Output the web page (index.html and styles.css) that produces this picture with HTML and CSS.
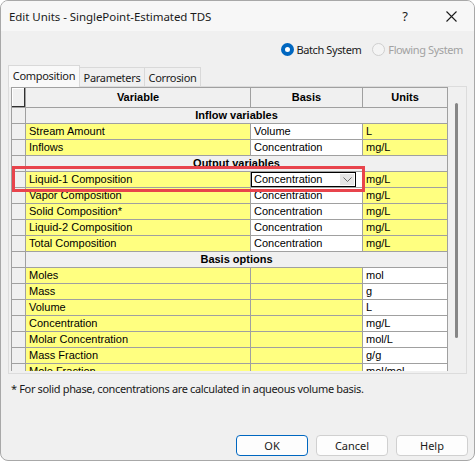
FILE: index.html
```html
<!DOCTYPE html>
<html lang="en">
<head>
  <meta charset="UTF-8" />
  <meta name="viewport" content="width=device-width, initial-scale=1.0"/>
  <title>Edit Units</title>
  <link rel="stylesheet" href="styles.css">
</head>
<body>
  <div class="window">
    <div class="titlebar">
      <span class="title">Edit Units - SinglePoint-Estimated TDS</span>
      <span class="title-btn help">?</span>
      <span class="title-btn close">
        <svg width="11" height="11" viewBox="0 0 11 11"><path d="M0.5 0.5 L10.5 10.5 M10.5 0.5 L0.5 10.5" stroke="#1b1b1b" stroke-width="1.1" fill="none"/></svg>
      </span>
    </div>

    <div class="systems">
      <label class="radio checked"><span class="dot"></span>Batch System</label>
      <label class="radio disabled"><span class="dot"></span>Flowing System</label>
    </div>

    <div class="tabs">
      <div class="tab active">Composition</div>
      <div class="tab">Parameters</div>
      <div class="tab">Corrosion</div>
    </div>

    <div class="tab-panel">
      <div class="grid">
        <div class="cell corner"></div>
        <div class="cell head">Variable</div>
        <div class="cell head">Basis</div>
        <div class="cell head">Units</div>

        <div class="cell rh"></div>
        <div class="cell group">Inflow variables</div>
        <div class="cell rh"></div>
        <div class="cell y">Stream Amount</div>
        <div class="cell w">Volume</div>
        <div class="cell y">L</div>
        <div class="cell rh"></div>
        <div class="cell y">Inflows</div>
        <div class="cell w">Concentration</div>
        <div class="cell y">mg/L</div>

        <div class="cell rh"></div>
        <div class="cell group">Output variables</div>
        <div class="cell rh"></div>
        <div class="cell y">Liquid-1 Composition</div>
        <div class="cell w combo-cell">
          <div class="combo">
            <span>Concentration</span>
            <span class="drop"><svg width="9" height="5" viewBox="0 0 9 5"><path d="M0.5 0.5 L4.5 4.5 L8.5 0.5" stroke="#6d6d6d" fill="none"/></svg></span>
          </div>
        </div>
        <div class="cell y">mg/L</div>
        <div class="cell rh"></div>
        <div class="cell y">Vapor Composition</div>
        <div class="cell w">Concentration</div>
        <div class="cell y">mg/L</div>
        <div class="cell rh"></div>
        <div class="cell y">Solid Composition*</div>
        <div class="cell w">Concentration</div>
        <div class="cell y">mg/L</div>
        <div class="cell rh"></div>
        <div class="cell y">Liquid-2 Composition</div>
        <div class="cell w">Concentration</div>
        <div class="cell y">mg/L</div>
        <div class="cell rh"></div>
        <div class="cell y">Total Composition</div>
        <div class="cell w">Concentration</div>
        <div class="cell y">mg/L</div>

        <div class="cell rh"></div>
        <div class="cell group">Basis options</div>
        <div class="cell rh"></div>
        <div class="cell y">Moles</div>
        <div class="cell y"></div>
        <div class="cell w">mol</div>
        <div class="cell rh"></div>
        <div class="cell y">Mass</div>
        <div class="cell y"></div>
        <div class="cell w">g</div>
        <div class="cell rh"></div>
        <div class="cell y">Volume</div>
        <div class="cell y"></div>
        <div class="cell w">L</div>
        <div class="cell rh"></div>
        <div class="cell y">Concentration</div>
        <div class="cell y"></div>
        <div class="cell w">mg/L</div>
        <div class="cell rh"></div>
        <div class="cell y">Molar Concentration</div>
        <div class="cell y"></div>
        <div class="cell w">mol/L</div>
        <div class="cell rh"></div>
        <div class="cell y">Mass Fraction</div>
        <div class="cell y"></div>
        <div class="cell w">g/g</div>
        <div class="cell rh"></div>
        <div class="cell y">Mole Fraction</div>
        <div class="cell y"></div>
        <div class="cell w">mol/mol</div>
      </div>
      <div class="scroll"><div class="thumb"></div></div>
      <div class="highlight"></div>
    </div>

    <p class="note">* For solid phase, concentrations are calculated in aqueous volume basis.</p>

    <div class="actions">
      <button class="btn default">OK</button>
      <button class="btn">Cancel</button>
      <button class="btn">Help</button>
    </div>
  </div>
</body>
</html>
```

FILE: styles.css
```css
body {
  margin: 0;
  background: #ffffff;
  font-family: 'Noto Sans', 'Liberation Sans', sans-serif;
  font-size: 11px;
  color: #1a1a1a;
}

.window {
  box-sizing: border-box;
  width: 475px;
  height: 461px;
  border: 1px solid #a8a8a8;
  border-radius: 8px;
  background: #f0f0f0;
  overflow: hidden;
}

.titlebar {
  height: 30px;
  display: flex;
  align-items: center;
  background: #f7f7f7;
  padding-left: 8px;
}

.title {
  flex: 1;
  font-size: 11.5px;
  letter-spacing: -0.05px;
  color: #1a1a1a;
}

.title-btn {
  display: flex;
  align-items: center;
  justify-content: center;
  width: 46px;
  height: 30px;
  font-size: 13px;
}

.systems {
  display: flex;
  justify-content: flex-end;
  gap: 11px;
  height: 16px;
  margin-top: 10px;
  padding-right: 11px;
}

.radio {
  display: flex;
  align-items: center;
  gap: 3px;
  font-size: 11px;
  letter-spacing: -0.4px;
}

.dot {
  box-sizing: border-box;
  width: 13px;
  height: 13px;
  border-radius: 50%;
  border: 1px solid #8a8a8a;
  background: #fafafa;
}

.checked .dot {
  border: 4px solid #0067c0;
  background: #ffffff;
}

.disabled { color: #a2a2a2; }
.disabled .dot { border-color: #cfcfcf; background: #f4f4f4; }

.tabs {
  display: flex;
  align-items: flex-end;
  height: 21px;
  margin-top: 8px;
  padding-left: 7px;
}

.tab {
  box-sizing: border-box;
  height: 19px;
  padding: 0;
  border: 1px solid #d9d9d9;
  border-bottom: none;
  border-left: none;
  display: flex;
  align-items: center;
  justify-content: center;
  background: #f0f0f0;
  letter-spacing: -0.3px;
}

.tab.active {
  height: 22px;
  margin-bottom: -1px;
  border-left: 1px solid #d9d9d9;
  background: #f9f9f9;
  position: relative;
  z-index: 1;
  width: 72px;
  padding-bottom: 3px;
}

.tab:nth-child(2) { width: 65px; }
.tab:nth-child(3) { width: 56px; }

.tab-panel {
  position: relative;
  box-sizing: border-box;
  width: 459px;
  height: 288px;
  margin-left: 7px;
  border: 1px solid #dcdcdc;
  padding: 0 0 2px 2px;
  display: flex;
}

.grid {
  display: grid;
  grid-template-columns: 13px 224px 111px 84px;
  grid-auto-rows: 15px;
  grid-template-rows: 19px;
  gap: 1px;
  padding: 1px;
  width: 437px;
  box-sizing: border-box;
  height: 284px;
  overflow: hidden;
  background: #a0a0a0;
  align-content: start;
  font-family: 'Liberation Sans', Arial, sans-serif;
  font-size: 11px;
  color: #000;
}

.cell {
  padding-left: 3px;
  line-height: 15px;
  white-space: nowrap;
  overflow: hidden;
}

.corner {
  padding: 0;
  background: #f0f0f0;
  box-shadow: inset -1px -1px 0 #303030, inset 1px 1px 0 #ffffff;
}

.head {
  background: #f0f0f0;
  font-weight: bold;
  text-align: center;
  line-height: 19px;
  padding: 0;
}

.rh { background: #f0f0f0; padding: 0; }
.y { background: #ffff80; }
.w { background: #ffffff; }

.group {
  grid-column: span 3;
  background: #f0f0f0;
  font-weight: bold;
  text-align: center;
  padding: 0;
}

.combo-cell { padding: 0; }

.combo {
  box-sizing: border-box;
  height: 15px;
  border: 1px solid #000;
  background: #fff;
  display: flex;
  align-items: center;
  justify-content: space-between;
  padding-left: 2px;
  margin-right: 6px;
  line-height: 13px;
}

.drop {
  display: flex;
  align-items: center;
  justify-content: center;
  width: 14px;
  height: 11px;
  margin-right: 1px;
  background: #e6e6e6;
}

.scroll {
  width: 18px;
  position: relative;
}

.thumb {
  position: absolute;
  left: 7px;
  top: 16px;
  width: 3px;
  height: 235px;
  border-radius: 2px;
  background: #868686;
}

.highlight {
  position: absolute;
  left: 3px;
  top: 79px;
  width: 353px;
  height: 26px;
  box-sizing: border-box;
  border: 3px solid #e8444c;
}

.note {
  margin: 7px 0 0 10px;
  line-height: 16px;
  font-size: 11px;
  letter-spacing: -0.35px;
}

.actions {
  display: flex;
  justify-content: flex-end;
  margin-top: 38px;
  padding-right: 6px;
}

.btn {
  box-sizing: border-box;
  width: 72px;
  height: 21px;
  margin-left: 8px;
  border: 1px solid #d0d0d0;
  border-radius: 4px;
  background: #fdfdfd;
  font-family: 'Noto Sans', 'Liberation Sans', sans-serif;
  font-size: 11px;
  color: #1a1a1a;
  padding: 0;
}

.btn.default {
  border-color: #0067c0;
}
```
